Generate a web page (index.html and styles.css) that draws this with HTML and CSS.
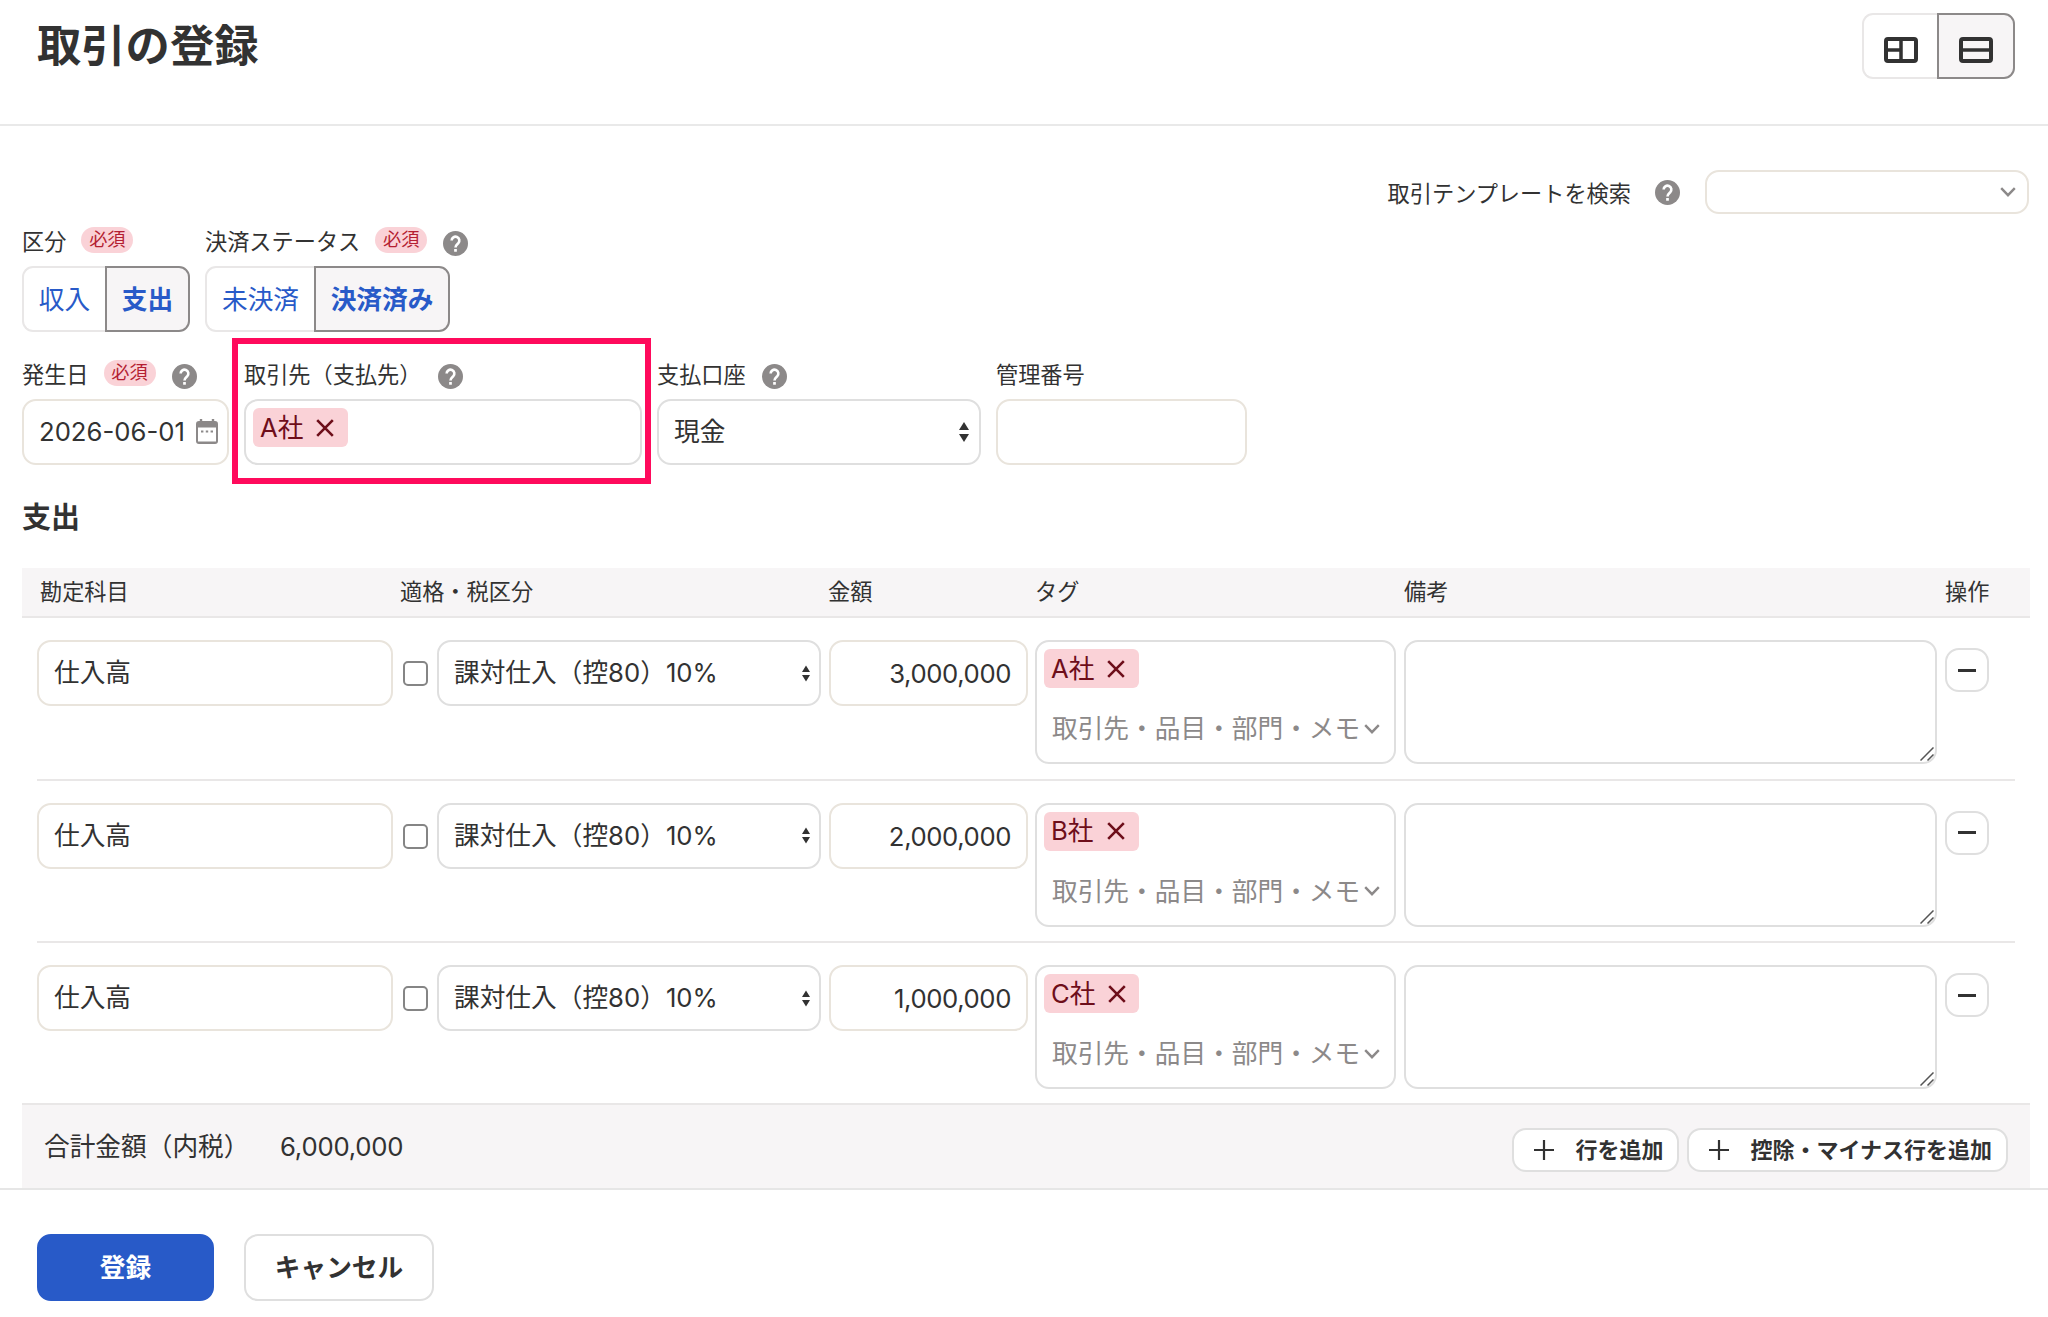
FILE: index.html
```html
<!DOCTYPE html>
<html lang="ja">
<head>
<meta charset="utf-8">
<title>取引の登録</title>
<link rel="stylesheet" href="styles.css">
</head>
<body>
<svg class="sprite" aria-hidden="true">
  <symbol id="help" viewBox="0 0 24 24"><circle cx="12" cy="12" r="12" fill="#8c8989"/><path d="M8.3 9.200a3.700 3.700 0 1 1 6.300 2.600c-1.500 1.400-2.600 2-2.600 4" fill="none" stroke="#fff" stroke-width="2.500"/><rect x="10.700" y="17.300" width="2.600" height="2.600" fill="#fff"/></symbol>
  <symbol id="cross" viewBox="0 0 18 18"><path d="M1.200 1.200l15.600 15.600M16.800 1.200L1.200 16.800" fill="none" stroke="#6e0e1a" stroke-width="2.600"/></symbol>
  <symbol id="updown" viewBox="0 0 10 20"><path d="M5 0l5 8H0zM5 20l5-8H0z" fill="#323232"/></symbol>
  <symbol id="chevron" viewBox="0 0 16 10"><path d="M1.200 1.200L8 8.200l6.800-7" fill="none" stroke="#8c8989" stroke-width="2.400"/></symbol>
  <symbol id="grip" viewBox="0 0 14 14"><path d="M.5 13.500L13.500.5M7.500 13.500l6-6" fill="none" stroke="#555" stroke-width="1.500"/></symbol>
  <symbol id="plus" viewBox="0 0 20 20"><path d="M10 0v20M0 10h20" fill="none" stroke="#323232" stroke-width="2.200"/></symbol>
</svg>

<header class="page-header">
  <h1>取引の登録</h1>
  <div class="toggle view-toggle">
    <span class="option"><svg width="34" height="26" viewBox="0 0 34 26"><rect x="2" y="2" width="30" height="22" rx="2" fill="none" stroke="#323232" stroke-width="4"/><path d="M17 2v22M3 13h14" stroke="#323232" stroke-width="3.500"/></svg></span>
    <span class="option selected"><svg width="34" height="26" viewBox="0 0 34 26"><rect x="2" y="2" width="30" height="22" rx="2" fill="none" stroke="#323232" stroke-width="4"/><path d="M3 13h28" stroke="#323232" stroke-width="3.500"/></svg></span>
  </div>
</header>

<main>
  <div class="template-search">
    <span class="template-label">取引テンプレートを検索</span>
    <svg class="help"><use href="#help"/></svg>
    <div class="field template-select"><svg class="chevron"><use href="#chevron"/></svg></div>
  </div>

  <div class="form-row">
    <div class="group kind">
      <div class="label"><span>区分</span><span class="required">必須</span></div>
      <div class="toggle"><span class="option">収入</span><span class="option selected">支出</span></div>
    </div>
    <div class="group status">
      <div class="label"><span>決済ステータス</span><span class="required">必須</span><svg class="help"><use href="#help"/></svg></div>
      <div class="toggle"><span class="option">未決済</span><span class="option selected">決済済み</span></div>
    </div>
  </div>

  <div class="form-row details">
    <div class="group date">
      <div class="label"><span>発生日</span><span class="required">必須</span><svg class="help"><use href="#help"/></svg></div>
      <div class="field date-field"><span>2026-06-01</span><svg class="calendar" width="22" height="25" viewBox="0 0 22 25"><path d="M3 2h16a3 3 0 0 1 3 3v17a3 3 0 0 1-3 3H3a3 3 0 0 1-3-3V5a3 3 0 0 1 3-3zM2 8.500v14h18v-14z" fill="#8c8989" fill-rule="evenodd"/><path d="M5 0v4M17 0v4" stroke="#8c8989" stroke-width="2.400"/><path d="M5 12.500h2.400M9.800 12.500h2.400M14.600 12.500h2.400" stroke="#8c8989" stroke-width="2.200"/></svg></div>
    </div>
    <div class="group partner">
      <div class="label"><span>取引先（支払先）</span><svg class="help"><use href="#help"/></svg></div>
      <div class="field plain tag-field"><span class="tag">A社<svg class="cross"><use href="#cross"/></svg></span></div>
    </div>
    <div class="group account">
      <div class="label"><span>支払口座</span><svg class="help"><use href="#help"/></svg></div>
      <div class="field plain select"><span>現金</span><svg class="updown"><use href="#updown"/></svg></div>
    </div>
    <div class="group number">
      <div class="label"><span>管理番号</span></div>
      <div class="field"></div>
    </div>
  </div>

  <h2>支出</h2>

  <section class="lines">
    <div class="line-grid line-head">
      <span class="first">勘定科目</span><span class="tax-head">適格・税区分</span><span>金額</span><span>タグ</span><span>備考</span><span>操作</span>
    </div>
    <div class="line-grid line">
      <div class="field">仕入高</div>
      <span class="checkbox"></span>
      <div class="field plain select tax"><span>課対仕入（控80）10%</span><svg class="updown"><use href="#updown"/></svg></div>
      <div class="field amount">3,000,000</div>
      <div class="field plain tags"><span class="tag">A社<svg class="cross"><use href="#cross"/></svg></span><div class="placeholder"><span>取引先・品目・部門・メモ</span><svg class="chevron"><use href="#chevron"/></svg></div></div>
      <div class="field plain note"><svg class="grip"><use href="#grip"/></svg></div>
      <span class="remove"></span>
    </div>
    <div class="line-grid line">
      <div class="field">仕入高</div>
      <span class="checkbox"></span>
      <div class="field plain select tax"><span>課対仕入（控80）10%</span><svg class="updown"><use href="#updown"/></svg></div>
      <div class="field amount">2,000,000</div>
      <div class="field plain tags"><span class="tag">B社<svg class="cross"><use href="#cross"/></svg></span><div class="placeholder"><span>取引先・品目・部門・メモ</span><svg class="chevron"><use href="#chevron"/></svg></div></div>
      <div class="field plain note"><svg class="grip"><use href="#grip"/></svg></div>
      <span class="remove"></span>
    </div>
    <div class="line-grid line">
      <div class="field">仕入高</div>
      <span class="checkbox"></span>
      <div class="field plain select tax"><span>課対仕入（控80）10%</span><svg class="updown"><use href="#updown"/></svg></div>
      <div class="field amount">1,000,000</div>
      <div class="field plain tags"><span class="tag">C社<svg class="cross"><use href="#cross"/></svg></span><div class="placeholder"><span>取引先・品目・部門・メモ</span><svg class="chevron"><use href="#chevron"/></svg></div></div>
      <div class="field plain note"><svg class="grip"><use href="#grip"/></svg></div>
      <span class="remove"></span>
    </div>
    <div class="total">
      <span class="total-label">合計金額（内税）</span><span class="total-value">6,000,000</span>
      <div class="add-buttons">
        <span class="add"><svg class="plus"><use href="#plus"/></svg>行を追加</span>
        <span class="add"><svg class="plus"><use href="#plus"/></svg>控除・マイナス行を追加</span>
      </div>
    </div>
  </section>
</main>

<footer>
  <span class="button primary">登録</span>
  <span class="button">キャンセル</span>
</footer>
</body>
</html>
```
FILE: styles.css
```css
* { box-sizing: border-box; }

body {
  margin: 0;
  height: 1317px;
  overflow: hidden;
  background: #fff;
  color: #323232;
  font-family: Inter, "Noto Sans CJK JP", sans-serif;
  font-size: 25.7px;
  line-height: 1;
  white-space: nowrap;
}

svg { display: block; flex: none; }
.sprite { position: absolute; width: 0; height: 0; }
h1, h2 { margin: 0; font-weight: 700; line-height: 1; }

.page-header {
  display: flex;
  justify-content: space-between;
  align-items: flex-start;
  height: 126px;
  padding: 13px 33px 0 37px;
  border-bottom: 2px solid #e9e9e9;
}
h1 { font-size: 44.3px; margin-top: 11px; }

.toggle { display: flex; height: 66px; }
.option {
  display: flex;
  align-items: center;
  justify-content: center;
  padding-top: 2px;
  border: 2px solid #e9e7e7;
  border-right: 0;
  border-radius: 11px 0 0 11px;
  color: #285ac8;
}
.option.selected {
  border: 2px solid #8c8989;
  border-radius: 0 11px 11px 0;
  background: #f7f5f6;
  font-weight: 700;
}
.view-toggle { width: 153px; }
.view-toggle .option { width: 75px; padding-top: 8px; }
.view-toggle .selected { width: 78px; }

.template-search {
  display: flex;
  align-items: center;
  justify-content: flex-end;
  height: 44px;
  margin-top: 44px;
  padding-right: 19px;
  font-size: 22.2px;
}
.template-label { padding-top: 4px; }
.template-search .help { margin: 0 25px 0 24px; }
.field.template-select { width: 324px; height: 44px; justify-content: flex-end; padding-right: 11px; }

.help { width: 25px; height: 25px; }
.chevron { width: 16px; height: 10px; }
.cross { width: 18px; height: 18px; }
.updown { width: 10px; height: 20px; }

.form-row { display: flex; padding-left: 22px; margin-top: 12px; }
.label {
  display: flex;
  align-items: center;
  height: 32px;
  margin-bottom: 8px;
  font-size: 22.2px;
}
.label .help { margin-top: 3px; }
.required {
  width: 52px;
  height: 26px;
  margin: -5px 0 0 15px;
  border-radius: 13px;
  background: #fad2d7;
  color: #b41e32;
  font-size: 18.2px;
  line-height: 25px;
  text-align: center;
}
.required + .help { margin-left: 16px; }
.kind { width: 183px; }
.kind .option { width: 83px; }
.kind .selected { width: 85px; }
.status .option { width: 109px; }
.status .selected { width: 136px; }

.details { margin-top: 0; height: 152px; }
.details .group { padding-top: 27px; }
.date { width: 210px; }
.date .field { width: 207px; }
.calendar { margin-top: -2px; }
.details .partner {
  width: 419px;
  height: 146px;
  margin-top: 6px;
  padding: 15px 0 0 6px;
  border: 6.500px solid #ff0a5c;
}
.partner .help { margin-left: 16px; }
.account { width: 339px; padding-left: 6px; }
.account .help { margin-left: 16px; }
.account .field { width: 324px; padding-right: 10px; }
.number { margin-left: 6px; }
.number .field { width: 251px; }

.field {
  display: flex;
  align-items: center;
  height: 66px;
  padding: 0 15px;
  border: 2px solid #e9e4dc;
  border-radius: 14px;
  background: #fff;
}
.field.plain { border-color: #dfdfdf; }
.select { justify-content: space-between; padding-right: 11px; }
.date-field { justify-content: space-between; padding-right: 9px; }
.tag-field { width: 398px; align-items: flex-start; padding: 7px 7px; }
.tag {
  display: inline-flex;
  align-items: center;
  gap: 13px;
  width: 95px;
  height: 39px;
  padding-left: 7px;
  border-radius: 6px;
  background: #fad2d7;
  color: #6e0e1a;
}

h2 { margin: 19px 0 0 22px; font-size: 29px; }

.lines { width: 2008px; margin: 36px 0 0 22px; }
.line-grid { display: grid; }
.line-head {
  height: 50px;
  padding-left: 15px;
  align-items: center;
  grid-template-columns: 363px 428px 207px 369px 541px auto;
  border-bottom: 2px solid #e9e7e7;
  background: #f7f5f6;
  font-size: 22.2px;
}
.line-head .first { padding-left: 3px; }
.line {
  height: 162.5px;
  margin: 0 15px;
  padding-top: 22px;
  border-bottom: 2px solid #e9e7e7;
  align-items: start;
  grid-template-columns: 356px 44px 384px 207px 369px 541px 44px;
}
.line:nth-child(4) { border-bottom: 0; height: 160px; }
.checkbox {
  width: 25px;
  height: 25px;
  margin: 21px 0 0 10px;
  border: 2px solid #858585;
  border-radius: 5px;
}
.tax { padding-right: 9px; }
.tax .updown { width: 8px; height: 17px; }
.amount { width: 199px; margin-left: 8px; padding-top: 2px; justify-content: flex-end; letter-spacing: -.4px; }
.field.tags { width: 361px; height: 124px; margin-left: 7px; padding: 7px 7px; flex-direction: column; align-items: flex-start; }
.placeholder { display: flex; align-items: center; margin: 28px 0 0 8px; color: #8c8989; gap: 4px; }
.field.note { width: 533px; height: 124px; margin-left: 7px; align-items: flex-end; justify-content: flex-end; padding: 0 1px 1px 0; }
.grip { width: 14px; height: 14px; }
.remove {
  display: flex;
  align-items: center;
  justify-content: center;
  width: 44px;
  height: 44px;
  margin: 8px 0 0 7px;
  border: 2px solid #dfdfdf;
  border-radius: 14px;
}
.remove::before { content: ""; width: 18px; height: 3px; background: #323232; }

.total {
  display: flex;
  align-items: center;
  height: 85px;
  padding: 0 22px 0 22px;
  border-top: 2px solid #e9e7e7;
  background: #f7f5f6;
}
.total-label { width: 236px; }
.total-value { letter-spacing: -.2px; }
.add-buttons { display: flex; gap: 8px; margin: 6px 0 0 auto; }
.add {
  display: flex;
  align-items: center;
  height: 44px;
  gap: 21px;
  padding: 0 14px 0 20px;
  border: 2px solid #dfdfdf;
  border-radius: 14px;
  background: #fff;
  font-size: 22px;
  font-weight: 700;
}
.plus { width: 20px; height: 20px; }

footer {
  display: flex;
  gap: 30px;
  padding: 44px 0 0 37px;
  border-top: 2px solid #e6e6e6;
}
.button {
  display: flex;
  align-items: center;
  justify-content: center;
  width: 190px;
  height: 67px;
  padding-top: 1px;
  border: 2px solid #dfdfdf;
  border-radius: 14px;
  font-weight: 700;
}
.primary { width: 177px; border-color: #285ac8; background: #285ac8; color: #fff; }
```
